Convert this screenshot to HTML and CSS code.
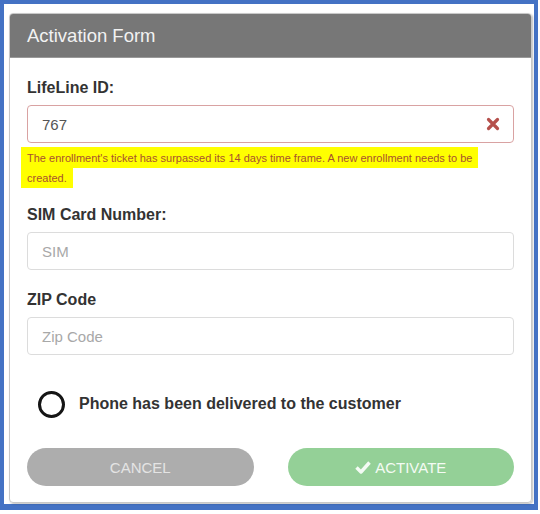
FILE: index.html
```html
<!DOCTYPE html>
<html lang="en">
<head>
    <meta charset="UTF-8">
    <meta name="viewport" content="width=device-width, initial-scale=1.0">
    <title>Activation Form</title>
    <link rel="stylesheet" href="styles.css">
</head>
<body>

<div class="frame">
    <div class="modal">
        <div class="modal-header">Activation Form</div>

        <div class="modal-body">
            <label class="field-label">LifeLine ID:</label>
            <div class="input has-error">
                <span class="value">767</span>
                <svg class="clear-icon" width="14" height="14" viewBox="0 0 14 14">
                    <path d="M2.5 2.5 L11.5 11.5 M11.5 2.5 L2.5 11.5" stroke="#b5504c" stroke-width="3.2" stroke-linecap="round"/>
                </svg>
            </div>
            <p class="error-text"><span>The enrollment's ticket has surpassed its 14 days time frame. A new enrollment needs to be created.</span></p>

            <label class="field-label sim-label">SIM Card Number:</label>
            <div class="input"><span class="placeholder">SIM</span></div>

            <label class="field-label zip-label">ZIP Code</label>
            <div class="input"><span class="placeholder">Zip Code</span></div>

            <div class="radio-row">
                <span class="radio"></span>
                <span class="radio-text">Phone has been delivered to the customer</span>
            </div>

            <div class="buttons">
                <button class="btn btn-cancel">CANCEL</button>
                <button class="btn btn-activate">
                    <svg width="16" height="14" viewBox="0 0 16 14">
                        <path d="M1.5 7.5 L6 12 L14.5 2.5" fill="none" stroke="#f4fbf4" stroke-width="3.4" stroke-linejoin="round"/>
                    </svg>
                    ACTIVATE
                </button>
            </div>
        </div>
    </div>
</div>

</body>
</html>
```

FILE: styles.css
```css
body {
    margin: 0;
    background: #fff;
    font-family: "Liberation Sans", Arial, sans-serif;
}
.frame {
    border: 4px solid #4472c4;
    border-bottom-width: 6px;
    padding: 9px 0 0 5px;
    box-sizing: content-box;
    width: 525px;
    height: 491px;
}
.modal {
    width: 521px;
    height: 488px;
    border: 1px solid #c8c8c8;
    border-radius: 4px;
    box-shadow: 1px 1px 2px rgba(0, 0, 0, 0.25);
    overflow: hidden;
}
.modal-header {
    height: 43px;
    background: #777;
    color: #f2f2f2;
    font-size: 18.5px;
    line-height: 43px;
    padding-left: 17px;
    border-bottom: 1px solid #999;
}
.modal-body {
    padding: 0 17px;
}
.field-label {
    display: block;
    margin-top: 20px;
    font-size: 16px;
    font-weight: bold;
    line-height: 20px;
    color: #333;
}
.sim-label {
    margin-top: 17px;
}
.zip-label {
    margin-top: 20px;
}
.input {
    display: flex;
    align-items: center;
    justify-content: space-between;
    height: 38px;
    margin-top: 7px;
    padding: 0 14px;
    border: 1px solid #dcdcdc;
    border-radius: 4px;
    box-sizing: border-box;
    font-size: 15px;
}
.input.has-error {
    border-color: #d9a2a2;
    padding-right: 13px;
}
.value {
    color: #555;
}
.placeholder {
    color: #a8a8a8;
}
.error-text {
    margin: 5px 0 0 -6px;
    width: 482px;
    font-size: 11px;
    line-height: 20px;
    color: #a8522e;
}
.error-text span {
    background: #ffff00;
    padding: 5px 6px 4px;
    -webkit-box-decoration-break: clone;
    box-decoration-break: clone;
}
.radio-row {
    display: flex;
    align-items: center;
    height: 28px;
    margin-top: 35px;
    padding-left: 11px;
}
.radio {
    width: 27px;
    height: 27px;
    border: 3.5px solid #151515;
    border-radius: 50%;
    box-sizing: border-box;
    margin-right: 14px;
}
.radio-text {
    font-size: 16px;
    font-weight: bold;
    color: #333;
}
.buttons {
    display: grid;
    grid-template-columns: 1fr 1fr;
    gap: 34px;
    margin-top: 30px;
}
.btn {
    height: 38px;
    border: none;
    border-radius: 19px;
    font-family: "Liberation Sans", Arial, sans-serif;
    font-size: 15px;
    display: flex;
    align-items: center;
    justify-content: center;
    gap: 4px;
}
.btn-cancel {
    background: #adadad;
    color: #e4e4e4;
}
.btn-activate {
    background: #94d097;
    color: #f4fbf4;
}
```
